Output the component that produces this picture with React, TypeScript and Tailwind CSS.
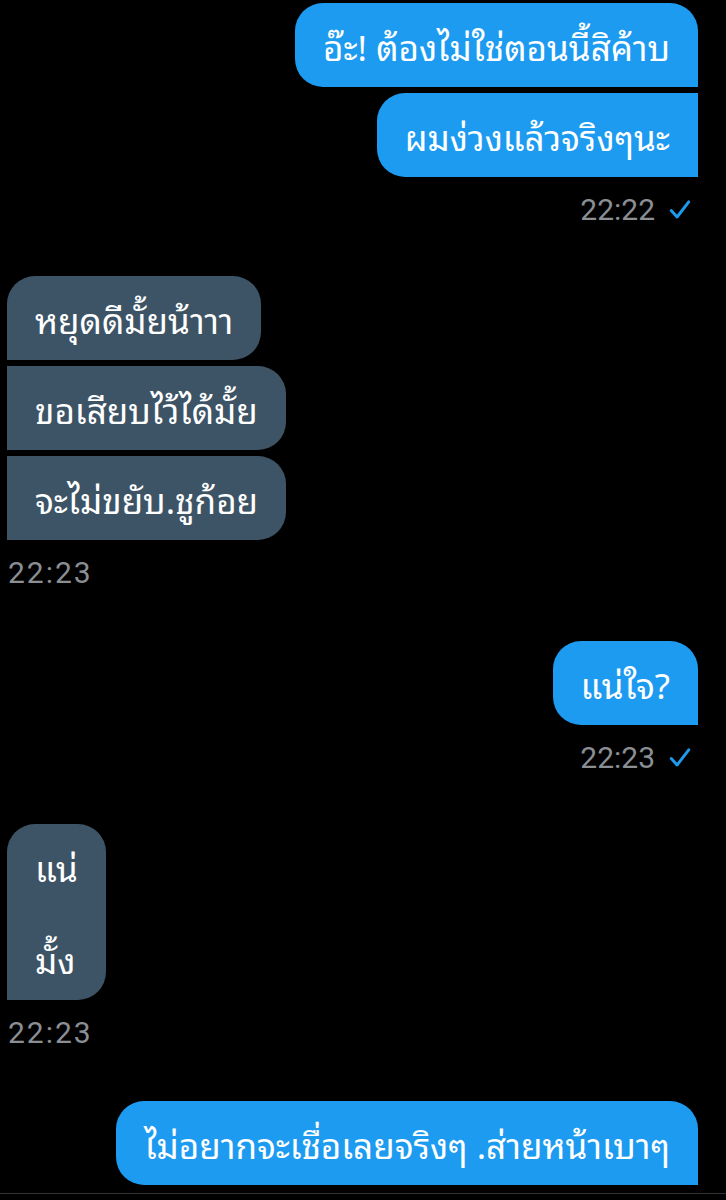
import React from "react";

type Side = "in" | "out";

interface Msg {
  text: string;
  // which corners are square (the "tail" side of grouped bubbles)
  corners: string;
}

interface Group {
  side: Side;
  messages: Msg[];
  time: string;
}

// กลุ่มข้อความตามลำดับในแชท
const groups: Group[] = [
  {
    side: "out",
    time: "22:22",
    messages: [
      { text: "อ๊ะ! ต้องไม่ใช่ตอนนี้สิค้าบ", corners: "rounded-[28px] rounded-br-none" },
      { text: "ผมง่วงแล้วจริงๆนะ", corners: "rounded-[28px] rounded-tr-none rounded-br-none" },
    ],
  },
  {
    side: "in",
    time: "22:23",
    messages: [
      { text: "หยุดดีมั้ยน้าาา", corners: "rounded-[28px] rounded-bl-none" },
      { text: "ขอเสียบไว้ได้มั้ย", corners: "rounded-[28px] rounded-tl-none rounded-bl-none" },
      { text: "จะไม่ขยับ.ชูก้อย", corners: "rounded-[28px] rounded-tl-none rounded-bl-none" },
    ],
  },
  {
    side: "out",
    time: "22:23",
    messages: [{ text: "แน่ใจ?", corners: "rounded-[28px] rounded-br-none" }],
  },
  {
    side: "in",
    time: "22:23",
    messages: [{ text: "แน่\n\nมั้ง", corners: "rounded-[28px] rounded-bl-none" }],
  },
];

function CheckMark() {
  return (
    <svg width="28" height="28" viewBox="0 0 24 24" fill="none" className="shrink-0">
      <path
        d="M4.5 12.5 L9.5 18 L19.5 5"
        stroke="#1d9bf0"
        strokeWidth="2.5"
        strokeLinecap="round"
        strokeLinejoin="round"
      />
    </svg>
  );
}

function Bubble({ side, msg }: { side: Side; msg: Msg }) {
  const color = side === "out" ? "bg-[#1d9bf0]" : "bg-[#3d5466]";
  return (
    <div
      className={`${color} ${msg.corners} px-[28px] py-[19px] text-[35px] leading-[46px] text-white whitespace-pre-line max-w-[620px]`}
      style={{ fontFamily: "'Noto Sans Thai Looped', 'Noto Looped Thai', Loma, Garuda, Roboto, 'Noto Sans Thai', sans-serif" }}
    >
      {msg.text}
    </div>
  );
}

function MessageGroup({ group }: { group: Group }) {
  const isOut = group.side === "out";
  return (
    <div className={`flex flex-col ${isOut ? "items-end" : "items-start mb-[2px]"}`}>
      <div className={`flex flex-col gap-[6px] ${isOut ? "items-end" : "items-start"}`}>
        {group.messages.map((m, i) => (
          <Bubble key={i} side={group.side} msg={m} />
        ))}
      </div>
      <div className={`mt-[13px] h-[40px] flex items-center gap-[11px] ${isOut ? "pr-[4px]" : "pl-[1px]"}`}>
        <span className={`text-[30px] leading-[40px] text-[#8b8f94] ${isOut ? "" : "tracking-[2px]"}`}>
          {group.time}
        </span>
        {isOut && <CheckMark />}
      </div>
    </div>
  );
}

export default function App() {
  return (
    <div
      className="w-[726px] h-[1200px] bg-black overflow-hidden flex flex-col"
      style={{ fontFamily: "Roboto, 'Noto Sans Thai', 'Noto Sans', sans-serif" }}
    >
      <div className="flex-1 flex flex-col gap-[46px] pt-[3px] pl-[7px] pr-[28px]">
        {groups.map((g, i) => (
          <MessageGroup key={i} group={g} />
        ))}
        <div className="flex justify-end">
          <Bubble
            side="out"
            msg={{ text: "ไม่อยากจะเชื่อเลยจริงๆ .ส่ายหน้าเบาๆ", corners: "rounded-[28px] rounded-br-none" }}
          />
        </div>
      </div>
      <div className="h-[7px] border-t border-[#2f3336]" />
    </div>
  );
}
